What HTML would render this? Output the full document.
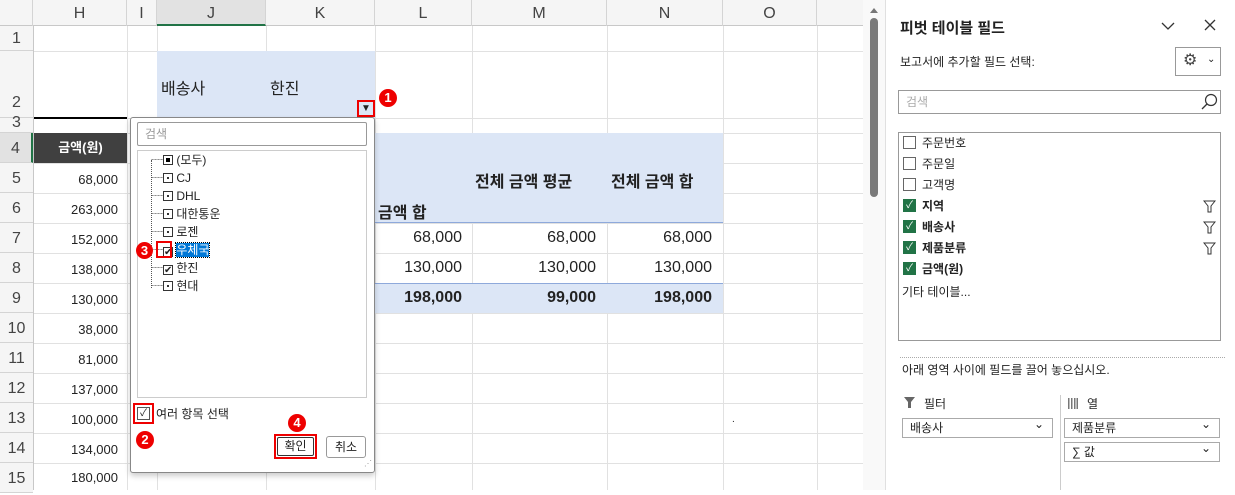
<!DOCTYPE html><html><head><meta charset="utf-8"><style>
*{box-sizing:border-box;margin:0;padding:0}
body{width:1235px;height:490px;overflow:hidden;background:#fff;font-family:"Liberation Sans","Noto Sans CJK KR",sans-serif;position:relative;color:#222}
.a{position:absolute}
.hl{position:absolute;height:1px;background:#e1e1e1}
.vl{position:absolute;width:1px;background:#e1e1e1}
.ch{position:absolute;top:0;height:26px;font-size:16px;color:#444;text-align:center;line-height:27px;border-right:1px solid #d4d4d4}
.rh{position:absolute;left:0;width:33px;font-size:16px;color:#444;text-align:center;border-bottom:1px solid #d4d4d4;background:#f5f5f5}
.num{position:absolute;font-size:13px;text-align:right;width:85px;left:33px}
.bad{position:absolute;width:18px;height:18px;border-radius:50%;background:#e00;color:#fff;font-size:13px;font-weight:bold;text-align:center;line-height:18px}
.t{position:absolute;font-size:13px;white-space:nowrap}
.cb{position:absolute;width:13px;height:13px;border:1px solid #666;background:#fff}
.gcb{position:absolute;width:13px;height:13px;background:#217346;color:#fff;font-size:10px;text-align:center;line-height:13px}
.dd{position:absolute;height:20px;border:1px solid #aaa;font-size:12px;padding-left:7px;line-height:18px}
.dd:after{content:"⌄";position:absolute;right:8px;top:-4px;font-size:12px}
.bx{display:inline-block;width:10px;height:10px;border:1px solid #333;vertical-align:-1px;position:relative}
.dot:after{content:"";position:absolute;left:3px;top:3px;width:2px;height:2px;background:#333}
</style></head><body>
<div class="a" style="left:0;top:0;width:863px;height:26px;background:#f5f5f5;border-bottom:1px solid #c8c8c8"></div>
<div class="a" style="left:0;top:0;width:33px;height:26px;border-right:1px solid #d4d4d4"></div>
<div class="ch" style="left:33px;width:94px">H</div>
<div class="ch" style="left:127px;width:30px">I</div>
<div class="ch" style="left:157px;width:109px;background:#e2e2e2;border-bottom:2px solid #217346">J</div>
<div class="ch" style="left:266px;width:109px">K</div>
<div class="ch" style="left:375px;width:97px">L</div>
<div class="ch" style="left:472px;width:135px">M</div>
<div class="ch" style="left:607px;width:116px">N</div>
<div class="ch" style="left:723px;width:94px">O</div>
<div class="a" style="left:33px;top:26px;width:1px;height:464px;background:#c8c8c8"></div>
<div class="rh" style="top:26px;height:25px;line-height:26px">1</div>
<div class="rh" style="top:51px;height:67px;line-height:104px">2</div>
<div class="rh" style="top:118px;height:15px;line-height:10px">3</div>
<div class="rh" style="top:133px;height:30px;line-height:32px;background:#e2e2e2;border-right:2px solid #217346">4</div>
<div class="rh" style="top:163px;height:30px;line-height:32px">5</div>
<div class="rh" style="top:193px;height:30px;line-height:32px">6</div>
<div class="rh" style="top:223px;height:30px;line-height:32px">7</div>
<div class="rh" style="top:253px;height:30px;line-height:32px">8</div>
<div class="rh" style="top:283px;height:30px;line-height:32px">9</div>
<div class="rh" style="top:313px;height:30px;line-height:32px">10</div>
<div class="rh" style="top:343px;height:30px;line-height:32px">11</div>
<div class="rh" style="top:373px;height:30px;line-height:32px">12</div>
<div class="rh" style="top:403px;height:30px;line-height:32px">13</div>
<div class="rh" style="top:433px;height:30px;line-height:32px">14</div>
<div class="rh" style="top:463px;height:30px;line-height:32px">15</div>
<div class="hl" style="left:34px;top:51px;width:829px"></div>
<div class="hl" style="left:34px;top:118px;width:829px"></div>
<div class="hl" style="left:34px;top:133px;width:829px"></div>
<div class="hl" style="left:34px;top:163px;width:829px"></div>
<div class="hl" style="left:34px;top:193px;width:829px"></div>
<div class="hl" style="left:34px;top:223px;width:829px"></div>
<div class="hl" style="left:34px;top:253px;width:829px"></div>
<div class="hl" style="left:34px;top:283px;width:829px"></div>
<div class="hl" style="left:34px;top:313px;width:829px"></div>
<div class="hl" style="left:34px;top:343px;width:829px"></div>
<div class="hl" style="left:34px;top:373px;width:829px"></div>
<div class="hl" style="left:34px;top:403px;width:829px"></div>
<div class="hl" style="left:34px;top:433px;width:829px"></div>
<div class="hl" style="left:34px;top:463px;width:829px"></div>
<div class="vl" style="left:127px;top:26px;height:464px"></div>
<div class="vl" style="left:157px;top:26px;height:464px"></div>
<div class="vl" style="left:266px;top:26px;height:464px"></div>
<div class="vl" style="left:375px;top:26px;height:464px"></div>
<div class="vl" style="left:472px;top:26px;height:464px"></div>
<div class="vl" style="left:607px;top:26px;height:464px"></div>
<div class="vl" style="left:723px;top:26px;height:464px"></div>
<div class="vl" style="left:817px;top:26px;height:464px"></div>
<div class="a" style="left:157px;top:51px;width:218px;height:67px;background:#dce6f6"></div>
<div class="t" style="left:161px;top:75px;font-size:16px">배송사</div>
<div class="t" style="left:270px;top:75px;font-size:16px">한진</div>
<div class="a" style="left:357px;top:100px;width:18px;height:17px;border:2px solid #e00;background:#dce6f6;font-size:10px;text-align:center;line-height:13px">▼</div>
<div class="bad" style="left:379px;top:89px">1</div>
<div class="a" style="left:34px;top:117px;width:93px;height:2px;background:#000"></div>
<div class="a" style="left:34px;top:133px;width:93px;height:30px;background:#404040;color:#fff;font-size:13px;font-weight:bold;text-align:center;line-height:30px">금액(원)</div>
<div class="num" style="top:172px">68,000</div>
<div class="num" style="top:202px">263,000</div>
<div class="num" style="top:232px">152,000</div>
<div class="num" style="top:262px">138,000</div>
<div class="num" style="top:292px">130,000</div>
<div class="num" style="top:322px">38,000</div>
<div class="num" style="top:352px">81,000</div>
<div class="num" style="top:382px">137,000</div>
<div class="num" style="top:412px">100,000</div>
<div class="num" style="top:442px">134,000</div>
<div class="num" style="top:470px">180,000</div>
<div class="a" style="left:375px;top:133px;width:348px;height:90px;background:#dce6f6;border-bottom:1px solid #8ea9db"></div>
<div class="a" style="left:375px;top:283px;width:348px;height:30px;background:#dce6f6;border-top:1px solid #8ea9db"></div>
<div class="t" style="left:378px;top:199px;font-size:16px;font-weight:bold">금액 합</div>
<div class="t" style="left:475px;top:168px;font-size:16px;font-weight:bold">전체 금액 평균</div>
<div class="t" style="left:611px;top:168px;font-size:16px;font-weight:bold">전체 금액 합</div>
<div class="t" style="left:375px;top:229px;width:87px;text-align:right;font-size:16px">68,000</div>
<div class="t" style="left:472px;top:229px;width:124px;text-align:right;font-size:16px">68,000</div>
<div class="t" style="left:607px;top:229px;width:105px;text-align:right;font-size:16px">68,000</div>
<div class="t" style="left:375px;top:259px;width:87px;text-align:right;font-size:16px">130,000</div>
<div class="t" style="left:472px;top:259px;width:124px;text-align:right;font-size:16px">130,000</div>
<div class="t" style="left:607px;top:259px;width:105px;text-align:right;font-size:16px">130,000</div>
<div class="t" style="left:375px;top:289px;width:87px;text-align:right;font-size:16px;font-weight:bold">198,000</div>
<div class="t" style="left:472px;top:289px;width:124px;text-align:right;font-size:16px;font-weight:bold">99,000</div>
<div class="t" style="left:607px;top:289px;width:105px;text-align:right;font-size:16px;font-weight:bold">198,000</div>
<div class="t" style="left:732px;top:414px;font-size:10px">.</div>
<div class="a" style="left:130px;top:117px;width:245px;height:356px;background:#fff;border:1px solid #888;border-radius:3px;box-shadow:0 3px 6px rgba(0,0,0,.2)"></div>
<div class="a" style="left:137px;top:122px;width:230px;height:24px;border:1px solid #999;border-radius:2px;font-size:12px;color:#999;padding:2px 7px">검색</div>
<div class="a" style="left:137px;top:150px;width:230px;height:248px;border:1px solid #ccc"></div>
<div class="a" style="left:151px;top:160px;width:1px;height:128px;border-left:1px dotted #555"></div>
<div class="t" style="left:151px;top:151px;font-size:12px;line-height:18px">
<div>┈<span class="bx" style="background:#000;box-shadow:inset 0 0 0 2px #fff"></span> (모두)</div>
<div>┈<span class="bx dot"></span> CJ</div>
<div>┈<span class="bx dot"></span> DHL</div>
<div>┈<span class="bx dot"></span> 대한통운</div>
<div>┈<span class="bx dot"></span> 로젠</div>
<div>┈<span class="bx" style="font-size:10px;line-height:9px">✔</span> <span style="background:#0078d7;color:#fff;outline:1px dotted #000">우체국</span></div>
<div>┈<span class="bx" style="font-size:10px;line-height:9px">✔</span> 한진</div>
<div>┈<span class="bx dot"></span> 현대</div>
</div>
<div class="a" style="left:156px;top:241px;width:16px;height:17px;border:2px solid #e00"></div>
<div class="bad" style="left:136px;top:242px;width:17px;height:17px">3</div>
<div class="a" style="left:133px;top:403px;width:21px;height:21px;border:2px solid #e00"></div>
<div class="a" style="left:137px;top:407px;width:13px;height:13px;border:1px solid #555;font-size:10px;line-height:11px;text-align:center">✓</div>
<div class="t" style="left:156px;top:405px;font-size:12px">여러 항목 선택</div>
<div class="bad" style="left:136px;top:431px">2</div>
<div class="bad" style="left:288px;top:414px">4</div>
<div class="a" style="left:274px;top:434px;width:43px;height:25px;border:2px solid #e00"></div>
<div class="a" style="left:277px;top:437px;width:37px;height:19px;border:1px solid #333;border-radius:2px;font-size:12px;text-align:center;line-height:17px">확인</div>
<div class="a" style="left:326px;top:436px;width:40px;height:22px;border:1px solid #999;border-radius:3px;font-size:12px;text-align:center;line-height:20px">취소</div>
<div class="t" style="left:364px;top:459px;font-size:8px;color:#999">⋰</div>
<div class="a" style="left:863px;top:0;width:22px;height:490px;background:#f9f9f9"></div>
<div class="a" style="left:870px;top:8px;width:0;height:0;border-left:4px solid transparent;border-right:4px solid transparent;border-bottom:5px solid #777"></div>
<div class="a" style="left:870px;top:18px;width:8px;height:179px;background:#7a7a7a;border-radius:4px"></div>
<div class="a" style="left:885px;top:0;width:350px;height:490px;background:#fff;border-left:1px solid #e0e0e0"></div>
<div class="t" style="left:900px;top:17px;font-size:15px;font-weight:bold">피벗 테이블 필드</div>
<svg class="a" style="left:1160px;top:20px" width="16" height="12"><path d="M2 3l6 6 6-6" fill="none" stroke="#333" stroke-width="1.3"/></svg>
<svg class="a" style="left:1204px;top:19px" width="12" height="12"><path d="M1 1l10 10M11 1L1 11" stroke="#333" stroke-width="1.3"/></svg>
<div class="t" style="left:900px;top:53px;font-size:12px">보고서에 추가할 필드 선택:</div>
<div class="a" style="left:1175px;top:47px;width:46px;height:29px;border:1px solid #999"></div>
<div class="t" style="left:1183px;top:50px;font-size:16px;color:#444">⚙</div>
<div class="t" style="left:1207px;top:54px;font-size:10px">⌄</div>
<div class="a" style="left:898px;top:90px;width:323px;height:24px;border:1px solid #999;font-size:12px;color:#aaa;padding:2px 7px">검색</div>
<svg class="a" style="left:1200px;top:93px" width="18" height="18"><circle cx="11" cy="7" r="5.5" fill="none" stroke="#333" stroke-width="1.2"/><path d="M7 11l-5 5" stroke="#333" stroke-width="1.3"/></svg>
<div class="a" style="left:898px;top:132px;width:323px;height:209px;border:1px solid #999"></div>
<div class="cb" style="left:903px;top:136px"></div><div class="t" style="left:922px;top:134px;font-size:12px">주문번호</div>
<div class="cb" style="left:903px;top:157px"></div><div class="t" style="left:922px;top:155px;font-size:12px">주문일</div>
<div class="cb" style="left:903px;top:178px"></div><div class="t" style="left:922px;top:176px;font-size:12px">고객명</div>
<div class="gcb" style="left:903px;top:199px">✓</div><div class="t" style="left:922px;top:197px;font-size:12px;font-weight:bold">지역</div>
<div class="gcb" style="left:903px;top:220px">✓</div><div class="t" style="left:922px;top:218px;font-size:12px;font-weight:bold">배송사</div>
<div class="gcb" style="left:903px;top:241px">✓</div><div class="t" style="left:922px;top:239px;font-size:12px;font-weight:bold">제품분류</div>
<div class="gcb" style="left:903px;top:262px">✓</div><div class="t" style="left:922px;top:260px;font-size:12px;font-weight:bold">금액(원)</div>
<div class="t" style="left:902px;top:283px;font-size:12px">기타 테이블...</div>
<svg class="a" style="left:1203px;top:200px" width="13" height="56"><g fill="none" stroke="#333" stroke-width="1"><path d="M1 1h11L8 6v6H5V6z"/><path d="M1 22h11L8 27v6H5v-6z"/><path d="M1 43h11L8 48v6H5v-6z"/></g></svg>
<div class="a" style="left:900px;top:357px;width:325px;border-top:1px dotted #aaa"></div>
<div class="t" style="left:902px;top:361px;font-size:12px">아래 영역 사이에 필드를 끌어 놓으십시오.</div>
<div class="a" style="left:1060px;top:395px;width:1px;height:95px;background:#ccc"></div>
<svg class="a" style="left:904px;top:397px" width="11" height="12"><path d="M0 0h11L7 5v6H4V5z" fill="#666"/></svg>
<div class="t" style="left:924px;top:395px;font-size:12px">필터</div>
<svg class="a" style="left:1068px;top:398px" width="10" height="11"><g fill="#777"><rect x="0" y="0" width="1.5" height="11"/><rect x="3" y="0" width="1.5" height="11"/><rect x="6" y="0" width="1.5" height="11"/><rect x="8.5" y="0" width="1.5" height="11"/></g></svg>
<div class="t" style="left:1087px;top:395px;font-size:12px">열</div>
<div class="dd" style="left:902px;top:418px;width:151px">배송사</div>
<div class="dd" style="left:1064px;top:418px;width:156px">제품분류</div>
<div class="dd" style="left:1064px;top:442px;width:156px">∑ 값</div>
</body></html>
